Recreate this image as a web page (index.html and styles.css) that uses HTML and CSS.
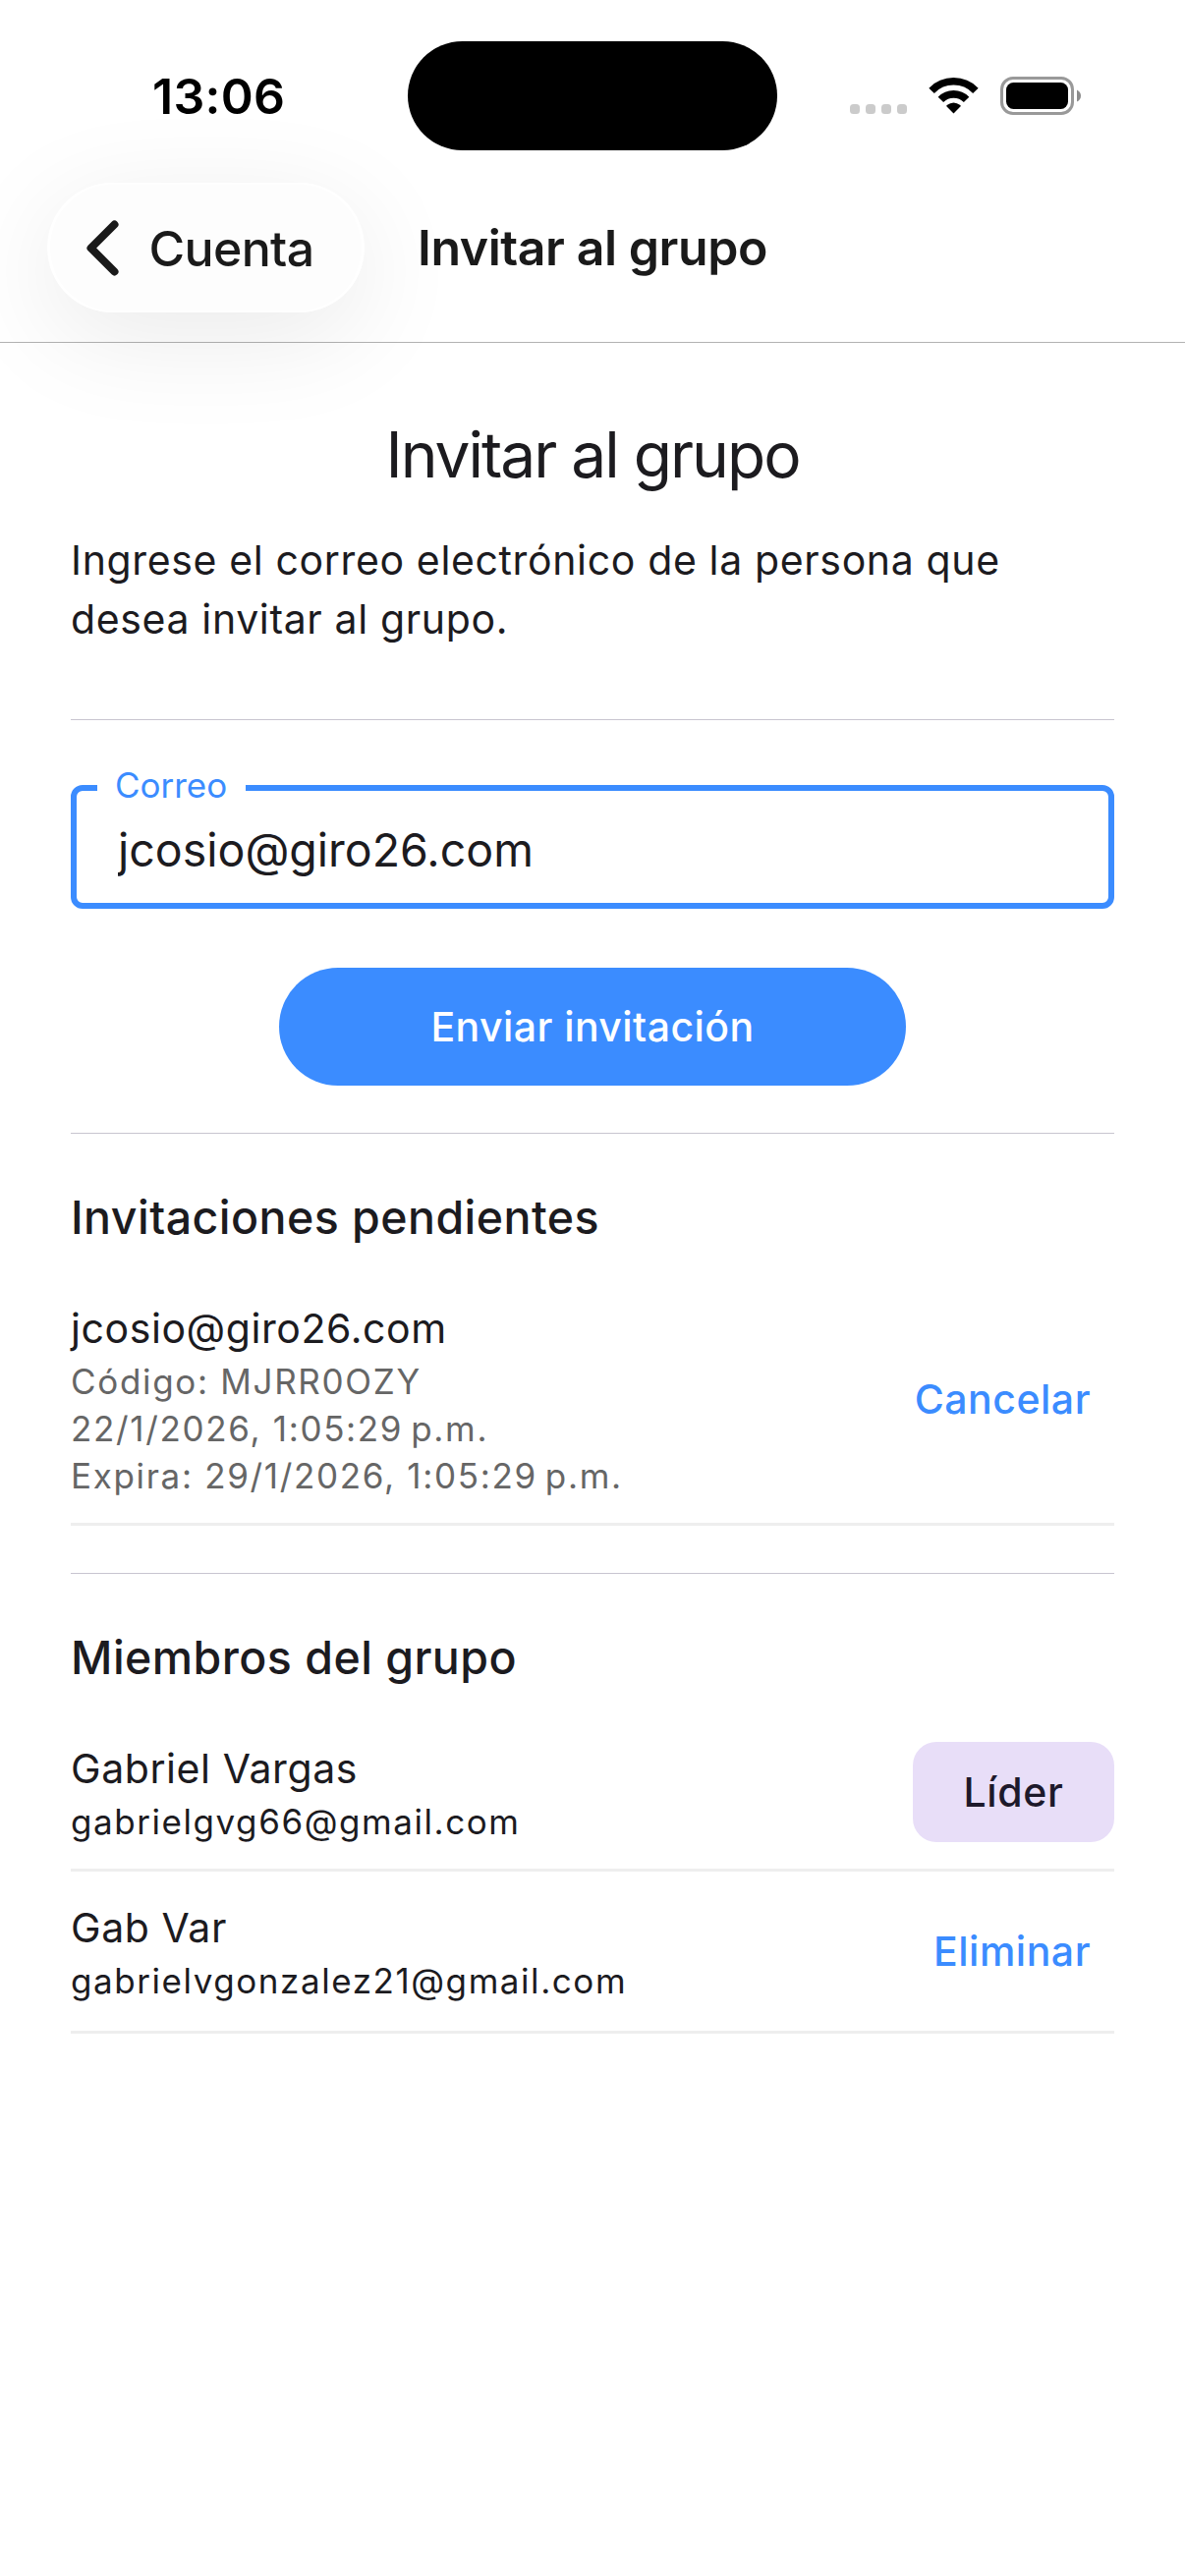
FILE: index.html
```html
<!DOCTYPE html>
<html lang="es">
<head>
  <meta charset="UTF-8">
  <meta name="viewport" content="width=device-width, initial-scale=1.0">
  <title>Invitar al grupo</title>
  <link rel="stylesheet" href="styles.css">
</head>
<body>
  <div class="status-bar">
    <span class="time">13:06</span>
    <div class="island"></div>
    <svg class="status-icons" width="236" height="42" viewBox="0 0 236 42">
      <!-- sin señal -->
      <g fill="#cbcbcb">
        <rect x="0" y="29" width="10" height="10" rx="3.5"/>
        <rect x="16" y="29" width="10" height="10" rx="3.5"/>
        <rect x="32" y="29" width="10" height="10" rx="3.5"/>
        <rect x="48" y="29" width="10" height="10" rx="3.5"/>
      </g>
      <!-- wifi -->
      <g fill="none" stroke="#000" stroke-width="7.6">
        <path d="M83.1 15.3 A31.2 31.2 0 0 1 127.9 15.3"/>
        <path d="M92.4 24.4 A18.2 18.2 0 0 1 118.6 24.4"/>
      </g>
      <path d="M105.5 38.6 L98.6 31.6 Q97.8 30.7 98.7 30 Q105.5 25 112.3 30 Q113.2 30.7 112.4 31.6 Z" fill="#000"/>
      <!-- batería -->
      <rect x="154.5" y="2.5" width="72" height="36" rx="11.5" fill="none" stroke="#999" stroke-width="3"/>
      <rect x="159" y="7" width="63" height="27" rx="7.5" fill="#000"/>
      <path d="M231 14.5 Q235 16.5 235 20.5 Q235 24.5 231 26.5 Z" fill="#8c8c8c"/>
    </svg>
  </div>

  <header class="nav">
    <a class="back" href="#">
      <svg width="34" height="58" viewBox="0 0 34 58">
        <path d="M29.5 5.5 L5.5 29.5 L29.5 53.5" fill="none" stroke="#1a1a1a" stroke-width="8" stroke-linecap="round" stroke-linejoin="round"/>
      </svg>
      <span>Cuenta</span>
    </a>
    <div class="nav-title">Invitar al grupo</div>
  </header>

  <main class="content">
    <h1>Invitar al grupo</h1>
    <p class="intro">Ingrese el correo electrónico de la persona que desea invitar al grupo.</p>

    <hr>

    <div class="field">
      <label for="correo">Correo</label>
      <input type="text" id="correo" value="jcosio@giro26.com">
    </div>
    <button type="button" class="send">Enviar invitación</button>

    <hr>

    <section>
      <h2>Invitaciones pendientes</h2>
      <div class="row">
        <div class="info">
          <div class="name">jcosio@giro26.com</div>
          <div class="small muted">Código: MJRR0OZY</div>
          <div class="small muted">22/1/2026, 1:05:29&#8239;p.m.</div>
          <div class="small muted">Expira: 29/1/2026, 1:05:29&#8239;p.m.</div>
        </div>
        <button type="button" class="link">Cancelar</button>
      </div>
    </section>

    <hr>

    <section>
      <h2>Miembros del grupo</h2>
      <div class="row">
        <div class="info">
          <div class="name">Gabriel Vargas</div>
          <div class="small">gabrielgvg66@gmail.com</div>
        </div>
        <span class="badge">Líder</span>
      </div>
      <div class="row">
        <div class="info">
          <div class="name">Gab Var</div>
          <div class="small">gabrielvgonzalez21@gmail.com</div>
        </div>
        <button type="button" class="link">Eliminar</button>
      </div>
    </section>
  </main>
</body>
</html>
```
FILE: styles.css
```css
* {
  box-sizing: border-box;
}
body {
  margin: 0;
  background: #fff;
  color: #1c1b1f;
  font-family: Inter, "Liberation Sans", sans-serif;
}
button, input {
  font-family: inherit;
  border: none;
  background: none;
  padding: 0;
}

/* barra de estado */
.status-bar {
  display: grid;
  grid-template-columns: 415px 376px 415px;
  align-items: center;
  height: 186px;
  padding-top: 8px;
}
.time {
  padding: 1px 0 0 155px;
  font-size: 50px;
  font-weight: 600;
  letter-spacing: 0.28px;
  color: #000;
}
.island {
  height: 111px;
  border-radius: 56px;
  background: #000;
}
.status-icons {
  margin: 2px 0 0 74px;
}

/* navegación */
.nav {
  display: grid;
  grid-template-columns: 323px 1fr 323px;
  height: 163px;
  padding: 0 48px 30px;
  border-bottom: 1px solid #b2b2b2;
  color: #1a1a1a;
}
.back {
  display: flex;
  align-items: center;
  gap: 30.5px;
  height: 132px;
  padding-left: 36px;
  border: 2px solid #fff;
  border-width: 2px 3px;
  border-radius: 66px;
  background: #fdfdfd;
  box-shadow: 0 24px 110px rgba(0, 0, 0, 0.085);
  color: inherit;
  text-decoration: none;
  font-size: 50px;
  font-weight: 500;
  letter-spacing: -0.65px;
}
.back span {
  padding-top: 1px;
}
.nav-title {
  line-height: 132px;
  font-size: 50px;
  font-weight: 600;
  letter-spacing: -0.43px;
  text-align: center;
}

.content {
  padding: 72px 72px 0;
}
h1 {
  margin: 0 0 35px;
  font-size: 64px;
  font-weight: 400;
  line-height: 84px;
  letter-spacing: -2px;
  text-align: center;
}
.intro {
  margin: 0 0 72px;
  font-size: 41px;
  line-height: 60px;
  letter-spacing: 0.64px;
}
hr {
  height: 1px;
  margin: 48px 0;
  border: none;
  background: #c8c5d0;
}

.field {
  position: relative;
  height: 126px;
  margin-top: 66px;
  border: 6px solid #3b8cff;
  border-radius: 12px;
}
.field label {
  position: absolute;
  top: -30px;
  left: 21px;
  width: 151px;
  padding-left: 18px;
  background: #fff;
  color: #3b8cff;
  font-size: 35px;
  line-height: 48px;
}
.field input {
  width: 100%;
  height: 114px;
  padding: 6px 42px 0 42px;
  color: #1c1b1f;
  font-size: 46.5px;
}
.send {
  display: block;
  width: 638px;
  height: 120px;
  margin: 60px auto 48px;
  border-radius: 60px;
  background: #3b8cff;
  color: #fff;
  font-size: 41px;
  font-weight: 500;
  letter-spacing: 0.43px;
}

h2 {
  margin: 0 0 24px;
  padding-top: 1px;
  height: 72px;
  font-size: 46.5px;
  font-weight: 500;
  line-height: 72px;
  letter-spacing: 0.45px;
}
.row {
  display: flex;
  justify-content: space-between;
  align-items: center;
  padding: 24px 0;
  border-bottom: 3px solid #eee;
}
.name {
  font-size: 41px;
  line-height: 60px;
  letter-spacing: 0.58px;
}
.small {
  font-size: 35px;
  line-height: 48px;
  letter-spacing: 1.56px;
}
.muted {
  color: #666;
  letter-spacing: 1.67px;
}
.link {
  height: 114px;
  padding: 0 24px;
  color: #3b8cff;
  font-size: 41px;
  font-weight: 500;
  letter-spacing: 0.5px;
}
.badge {
  width: 205px;
  border-radius: 24px;
  background: #e8def8;
  color: #1d192b;
  font-size: 41px;
  font-weight: 500;
  line-height: 102px;
  letter-spacing: 0.64px;
  text-align: center;
}
```
